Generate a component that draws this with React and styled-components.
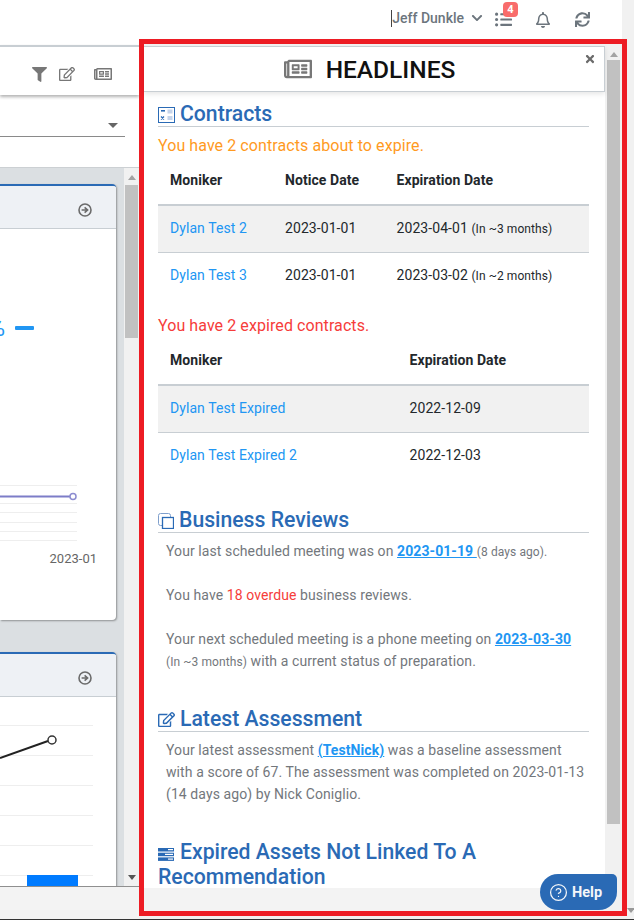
import React from 'react';
import styled, { createGlobalStyle } from 'styled-components';
import {
  FaFilter,
  FaRegEdit,
  FaRegNewspaper,
  FaListUl,
  FaChevronDown,
  FaRegBell,
  FaSync,
  FaTimes,
} from 'react-icons/fa';
import { CircleHelp } from 'lucide-react';

const GlobalStyle = createGlobalStyle`
  html, body {
    margin: 0;
    padding: 0;
    background: #f1f1f1;
    font-family: Roboto, "Liberation Sans", sans-serif;
  }
`;

const Page = styled.div`
  display: flex;
  width: 634px;
  height: 920px;
  overflow: hidden;
  box-sizing: border-box;
  border-bottom: 1px solid #333;
  background: #f1f1f1;
`;

const Workspace = styled.div`
  display: flex;
  flex-direction: column;
  width: 627px;
`;

const TopBar = styled.div`
  display: flex;
  align-items: center;
  justify-content: flex-end;
  width: 622px;
  height: 39px;
  flex: none;
  background: #fff;
  color: #6c757d;
  box-sizing: border-box;
`;

const UserName = styled.div`
  display: flex;
  align-items: center;
  font-size: 14px;
  font-weight: 500;
  line-height: 16px;
  border-left: 1px solid #444;
  margin: 0 12px 3px 0;
  height: 17px;
  svg {
    margin-left: 7px;
  }
`;

const TopIcon = styled.div`
  position: relative;
  display: flex;
  width: ${(p) => p.$width}px;
  justify-content: center;
`;

const Badge = styled.span`
  position: absolute;
  top: -9px;
  left: 8px;
  width: 15px;
  height: 15px;
  border-radius: 4px;
  background: #f86c6b;
  color: #fff;
  font-size: 11px;
  font-weight: 700;
  line-height: 15px;
  text-align: center;
`;

const Main = styled.div`
  display: flex;
  flex: 1;
  min-height: 0;
`;

const LeftPane = styled.div`
  display: flex;
  flex-direction: column;
  width: 139px;
  flex: none;
  background: #fff;
  padding-top: 6px;
  box-sizing: border-box;
`;

const Toolbar = styled.div`
  display: flex;
  align-items: center;
  justify-content: flex-end;
  gap: 12px;
  height: 50px;
  flex: none;
  border-top: 2px solid #c8ced3;
  box-shadow: 0 2px 3px rgba(0, 0, 0, 0.3);
  padding-right: 27px;
  padding-top: 6px;
  box-sizing: border-box;
  color: #777;
`;

const SelectRow = styled.div`
  height: 72px;
  flex: none;
  padding-top: 20px;
  box-sizing: border-box;
`;

const SelectLine = styled.div`
  display: flex;
  justify-content: flex-end;
  align-items: center;
  width: 125px;
  height: 22px;
  padding-right: 7px;
  box-sizing: border-box;
  border-bottom: 1px solid #8a8a8a;
`;

const Caret = styled.span`
  width: 0;
  height: 0;
  border-left: 5px solid transparent;
  border-right: 5px solid transparent;
  border-top: 5px solid #666;
`;

const CardArea = styled.div`
  display: flex;
  height: 719px;
  flex: none;
  background: #dbdfe2;
  border-top: 1px solid #ccd0d3;
  box-sizing: border-box;
`;

const CardColumn = styled.div`
  width: 124px;
  flex: none;
  overflow: hidden;
  padding-top: 16px;
  box-sizing: border-box;
`;

const Card = styled.div`
  width: 116px;
  height: ${(p) => p.$height}px;
  margin-bottom: 32px;
  background: #fff;
  border-top: 2px solid #2a6ab5;
  border-top-right-radius: 4px;
  border-bottom-right-radius: 4px;
  box-shadow: 1px 1px 2px rgba(0, 0, 0, 0.35);
  box-sizing: border-box;
  overflow: hidden;
`;

const CardHeader = styled.div`
  display: flex;
  align-items: center;
  justify-content: flex-end;
  height: 43px;
  padding: 5px 24px 0 0;
  background: #eef1f5;
  border-bottom: 1px solid #c8ced3;
  box-sizing: border-box;
  color: #6b6b6b;
`;

const Legend = styled.div`
  display: flex;
  justify-content: flex-end;
  align-items: center;
  gap: 10px;
  height: 24px;
  margin-top: 87px;
  padding-right: 82px;
  color: #2196f3;
  font-size: 24px;
  white-space: nowrap;
`;

const LegendDash = styled.span`
  width: 19px;
  height: 4px;
  flex: none;
  background: #2196f3;
  border-radius: 1px;
`;

const ChartSvg = styled.svg`
  display: block;
  margin-top: ${(p) => p.$top || 0}px;
`;

const AxisLabels = styled.div`
  display: flex;
  justify-content: flex-end;
  gap: 48px;
  padding-right: 19px;
  margin-top: 6px;
  font-size: 13px;
  line-height: 16px;
  color: #666;
  white-space: nowrap;
`;

const ScrollTrack = styled.div`
  display: flex;
  flex-direction: column;
  align-items: center;
  flex: 1;
  background: #f1f1f1;
  padding-top: ${(p) => p.$pad}px;
  box-sizing: border-box;
  overflow: hidden;
`;

const ArrowUp = styled.span`
  width: 0;
  height: 0;
  flex: none;
  border-left: 4px solid transparent;
  border-right: 4px solid transparent;
  border-bottom: 5px solid #a3a3a3;
`;

const ArrowDown = styled.span`
  width: 0;
  height: 0;
  flex: none;
  margin-top: auto;
  margin-bottom: 6px;
  border-left: 4px solid transparent;
  border-right: 4px solid transparent;
  border-top: 5px solid ${(p) => p.$color || '#555'};
`;

const Thumb = styled.div`
  width: ${(p) => p.$width}px;
  height: ${(p) => p.$height}px;
  flex: none;
  margin-top: ${(p) => p.$top}px;
  background: #c1c1c1;
`;

const Footer = styled.div`
  flex: 1;
  background: #f3f3f3;
  border-top: 1px solid #8f8f8f;
`;

const Panel = styled.section`
  position: relative;
  display: flex;
  flex-direction: column;
  width: 488px;
  height: 877px;
  flex: none;
  border: 5px solid #ed1c24;
  box-sizing: border-box;
  background: #f3f3f3;
`;

const PanelBody = styled.div`
  display: flex;
  height: 867px;
  flex: none;
`;

const PanelColumn = styled.div`
  display: flex;
  flex-direction: column;
  width: 461px;
  flex: none;
`;

const PanelHeader = styled.header`
  position: relative;
  display: flex;
  align-items: center;
  justify-content: center;
  gap: 14px;
  height: 46px;
  flex: none;
  margin-top: 2px;
  padding-right: 9px;
  background: #fff;
  border: 1px solid #c8ced3;
  border-left: none;
  box-shadow: 0 2px 5px rgba(0, 0, 0, 0.1);
  box-sizing: border-box;
  color: #777;
  z-index: 1;
`;

const Title = styled.h1`
  margin: 2px 0 0;
  font-size: 24.5px;
  font-weight: 500;
  color: #111;
  line-height: 28px;
`;

const CloseButton = styled.span`
  position: absolute;
  top: 6px;
  right: 8px;
  display: flex;
  color: #6b6b6b;
`;

const PanelScroll = styled.div`
  height: 796px;
  flex: none;
  padding: 9px 16px 0 14px;
  background: #fff;
  box-sizing: border-box;
  overflow: hidden;
`;

const Section = styled.div`
  margin-bottom: ${(p) => p.$gap || 0}px;
`;

const Heading = styled.h2`
  margin: 0;
  padding-top: 1px;
  font-size: 21.2px;
  font-weight: 500;
  line-height: 24px;
  color: #2a6ab5;
  border-bottom: 1px solid #c8ced3;
  svg {
    vertical-align: -2px;
    margin-right: 5px;
  }
`;

const PlainHeading = styled(Heading)`
  border-bottom: none;
  line-height: 25px;
`;

const Notice = styled.div`
  margin-top: ${(p) => p.$top}px;
  font-size: 16px;
  line-height: 19px;
  letter-spacing: 0.08px;
  color: ${(p) => p.$color};
`;

const Table = styled.div`
  margin-top: 2px;
  font-size: 14px;
  letter-spacing: 0.07px;
  color: #23282c;
`;

const Row = styled.div`
  display: grid;
  grid-template-columns: ${(p) => p.$cols};
  align-items: center;
  height: ${(p) => (p.$head ? 49 : 47)}px;
  padding: 0 0 ${(p) => p.$lift}px 12px;
  box-sizing: border-box;
  font-weight: ${(p) => (p.$head ? 700 : 400)};
  background: ${(p) => (p.$shade ? '#f1f1f1' : 'transparent')};
  border-bottom: ${(p) => p.$rule || 'none'};
`;

const RowLink = styled.span`
  color: #2196f3;
`;

const Small = styled.small`
  font-size: 12px;
  line-height: 1;
`;

const Copy = styled.p`
  margin: ${(p) => p.$top || 0}px 0 0;
  padding-left: 8px;
  font-size: 14px;
  line-height: 22px;
  letter-spacing: 0.09px;
  color: #73777c;
`;

const Strong = styled.a`
  color: #2196f3;
  font-weight: 700;
  text-decoration: underline;
`;

const Red = styled.span`
  color: #f63c3a;
`;

const HelpButton = styled.button`
  position: absolute;
  right: 5px;
  bottom: 1px;
  display: flex;
  align-items: center;
  gap: 4px;
  width: 77px;
  height: 36px;
  padding: 0 0 0 9px;
  border: none;
  border-radius: 18px 5px 18px 18px;
  background: #2a6ab5;
  color: #f4f6f9;
  font-family: inherit;
  font-size: 14.5px;
  font-weight: 700;
`;

const PageEdge = styled.div`
  display: flex;
  flex-direction: column;
  align-items: center;
  width: 7px;
  flex: none;
  box-sizing: border-box;
`;

const CalcIcon = () => (
  <svg width="17" height="16" viewBox="0 0 17 16">
    <rect x="0.5" y="0.5" width="16" height="15" fill="#fff" stroke="#2a6ab5" />
    <rect x="3" y="3" width="4" height="1.6" fill="#2a6ab5" />
    <rect x="9.5" y="2.5" width="5" height="4" fill="#c5d4ea" />
    <rect x="9.5" y="9" width="5" height="4" fill="#c5d4ea" />
    <path d="M3 9.5l3 3M6 9.5l-3 3" stroke="#2a6ab5" strokeWidth="1.2" />
  </svg>
);

const CopyIcon = () => (
  <svg width="16" height="16" viewBox="0 0 16 16" fill="none">
    <path d="M4 12.5H2.5a2 2 0 0 1-2-2V2.5a2 2 0 0 1 2-2h8a2 2 0 0 1 2 2V4" stroke="#7f9fcc" />
    <rect x="4.5" y="4.5" width="11" height="11" stroke="#2a6ab5" strokeWidth="1.3" />
  </svg>
);

const BarsIcon = () => (
  <svg width="17" height="13" viewBox="0 0 17 13">
    <rect x="0" y="0" width="16" height="3.5" fill="#2a6ab5" />
    <rect x="0" y="4.7" width="16" height="3.5" fill="#2a6ab5" />
    <rect x="0" y="9.4" width="16" height="3.5" fill="#2a6ab5" />
    <rect x="10" y="1" width="5" height="1.2" fill="#fff" />
    <rect x="7" y="5.8" width="8" height="1.2" fill="#fff" />
    <rect x="10" y="10.5" width="5" height="1.2" fill="#fff" />
  </svg>
);

const CircleArrow = () => (
  <svg width="14" height="14" viewBox="0 0 14 14" fill="none">
    <circle cx="7" cy="7" r="6" stroke="#6b6b6b" strokeWidth="1.6" />
    <path d="M3.6 7h5M6.6 4.3L9.6 7l-3 2.7" stroke="#6b6b6b" strokeWidth="1.6" />
  </svg>
);

const expiringRows = [
  { name: 'Dylan Test 2', notice: '2023-01-01', date: '2023-04-01', left: '(In ~3 months)', shade: true },
  { name: 'Dylan Test 3', notice: '2023-01-01', date: '2023-03-02', left: '(In ~2 months)' },
];

const expiredRows = [
  { name: 'Dylan Test Expired', date: '2022-12-09', shade: true },
  { name: 'Dylan Test Expired 2', date: '2022-12-03' },
];

const expiringCols = '115px 111.5px 1fr';
const expiredCols = '239.5px 1fr';

const App = () => (
  <>
    <GlobalStyle />
    <Page>
      <Workspace>
        <TopBar>
          <UserName>
            Jeff Dunkle
            <FaChevronDown size={12} />
          </UserName>
          <TopIcon $width={17}>
            <FaListUl size={17} />
            <Badge>4</Badge>
          </TopIcon>
          <TopIcon $width={62}>
            <FaRegBell size={16} />
          </TopIcon>
          <TopIcon $width={16}>
            <FaSync size={15} />
          </TopIcon>
          <TopIcon $width={32} />
        </TopBar>
        <Main>
          <LeftPane>
            <Toolbar>
              <FaFilter size={15} />
              <FaRegEdit size={16} />
              <FaRegNewspaper size={18} style={{ marginLeft: 7 }} />
            </Toolbar>
            <SelectRow>
              <SelectLine>
                <Caret />
              </SelectLine>
            </SelectRow>
            <CardArea>
              <CardColumn>
                <Card $height={436}>
                  <CardHeader>
                    <CircleArrow />
                  </CardHeader>
                  <Legend>
                    %
                    <LegendDash />
                  </Legend>
                  <ChartSvg width="116" height="60" viewBox="0 0 116 60" $top={145}>
                    <g stroke="#eeeeee">
                      <path d="M0 0.5H77M0 18.5H77M0 27.5H77M0 37.5H77M0 46.5H77M0 55.5H77" />
                    </g>
                    <path d="M0 11.5H70" stroke="#7d7dc8" strokeWidth="2" />
                    <circle cx="73" cy="11.5" r="3" fill="#fff" stroke="#8c8cd0" strokeWidth="1.5" />
                  </ChartSvg>
                  <AxisLabels>
                    <span>2022-11</span>
                    <span>2023-01</span>
                  </AxisLabels>
                </Card>
                <Card $height={260}>
                  <CardHeader>
                    <CircleArrow />
                  </CardHeader>
                  <ChartSvg width="116" height="170" viewBox="0 0 116 170" $top={28}>
                    <g stroke="#eeeeee">
                      <path d="M0 0.5H93M0 30.5H93M0 60.5H93M0 90.5H93M0 120.5H93M0 150.5H93" />
                    </g>
                    <rect x="27" y="150" width="51" height="20" fill="#007bff" />
                    <path d="M0 33L48 16" stroke="#222" strokeWidth="2" />
                    <circle cx="52" cy="15" r="4" fill="#fff" stroke="#333" strokeWidth="1.5" />
                  </ChartSvg>
                </Card>
              </CardColumn>
              <ScrollTrack $pad={7}>
                <ArrowUp />
                <Thumb $width={13} $height={153} $top={5} />
                <ArrowDown />
              </ScrollTrack>
            </CardArea>
            <Footer />
          </LeftPane>
          <Panel>
            <PanelBody>
              <PanelColumn>
                <PanelHeader>
                  <FaRegNewspaper size={28} />
                  <Title>HEADLINES</Title>
                  <CloseButton>
                    <FaTimes size={12} />
                  </CloseButton>
                </PanelHeader>
                <PanelScroll>
                  <Section $gap={27}>
                    <Heading>
                      <CalcIcon />
                      Contracts
                    </Heading>
                    <Notice $top={9} $color="#ff9a1f">You have 2 contracts about to expire.</Notice>
                    <Table>
                      <Row $head $lift={2} $cols={expiringCols} $rule="2px solid #c8ced3">
                        <span>Moniker</span>
                        <span>Notice Date</span>
                        <span>Expiration Date</span>
                      </Row>
                      {expiringRows.map((row) => (
                        <Row
                          key={row.name}
                          $lift={row.shade ? 2 : 4}
                          $cols={expiringCols}
                          $shade={row.shade}
                          $rule={row.shade ? '1px solid #c8ced3' : undefined}
                        >
                          <RowLink>{row.name}</RowLink>
                          <span>{row.notice}</span>
                          <span>
                            {row.date} <Small>{row.left}</Small>
                          </span>
                        </Row>
                      ))}
                    </Table>
                    <Notice $top={16} $color="#f63c3a">You have 2 expired contracts.</Notice>
                    <Table>
                      <Row $head $lift={2} $cols={expiredCols} $rule="2px solid #c8ced3">
                        <span>Moniker</span>
                        <span>Expiration Date</span>
                      </Row>
                      {expiredRows.map((row) => (
                        <Row
                          key={row.name}
                          $lift={row.shade ? 2 : 4}
                          $cols={expiredCols}
                          $shade={row.shade}
                          $rule={row.shade ? '1px solid #c8ced3' : undefined}
                        >
                          <RowLink>{row.name}</RowLink>
                          <span>{row.date}</span>
                        </Row>
                      ))}
                    </Table>
                  </Section>
                  <Section $gap={34}>
                    <Heading>
                      <CopyIcon />
                      Business Reviews
                    </Heading>
                    <Copy $top={7}>
                      Your last scheduled meeting was on <Strong>2023-01-19 </Strong><Small>(8 days ago).</Small>
                    </Copy>
                    <Copy $top={22}>
                      You have <Red>18 overdue</Red> business reviews.
                    </Copy>
                    <Copy $top={22}>
                      Your next scheduled meeting is a phone meeting on <Strong>2023-03-30</Strong>
                      <br />
                      <Small>(In ~3 months)</Small> with a current status of preparation.
                    </Copy>
                  </Section>
                  <Section $gap={33}>
                    <Heading>
                      <FaRegEdit size={17} />
                      Latest Assessment
                    </Heading>
                    <Copy $top={7}>
                      Your latest assessment <Strong>(TestNick)</Strong> was a baseline assessment
                      <br />
                      with a score of 67. The assessment was completed on 2023-01-13
                      <br />
                      (14 days ago) by Nick Coniglio.
                    </Copy>
                  </Section>
                  <Section>
                    <PlainHeading>
                      <BarsIcon />
                      Expired Assets Not Linked To A Recommendation
                    </PlainHeading>
                  </Section>
                </PanelScroll>
              </PanelColumn>
              <ScrollTrack $pad={8}>
                <ArrowUp />
                <Thumb $width={13} $height={764} $top={3} />
              </ScrollTrack>
            </PanelBody>
            <HelpButton>
              <CircleHelp size={19} strokeWidth={1.6} />
              Help
            </HelpButton>
          </Panel>
          <PageEdge>
            <ArrowDown $color="#999" />
          </PageEdge>
        </Main>
      </Workspace>
    </Page>
  </>
);

export default App;
